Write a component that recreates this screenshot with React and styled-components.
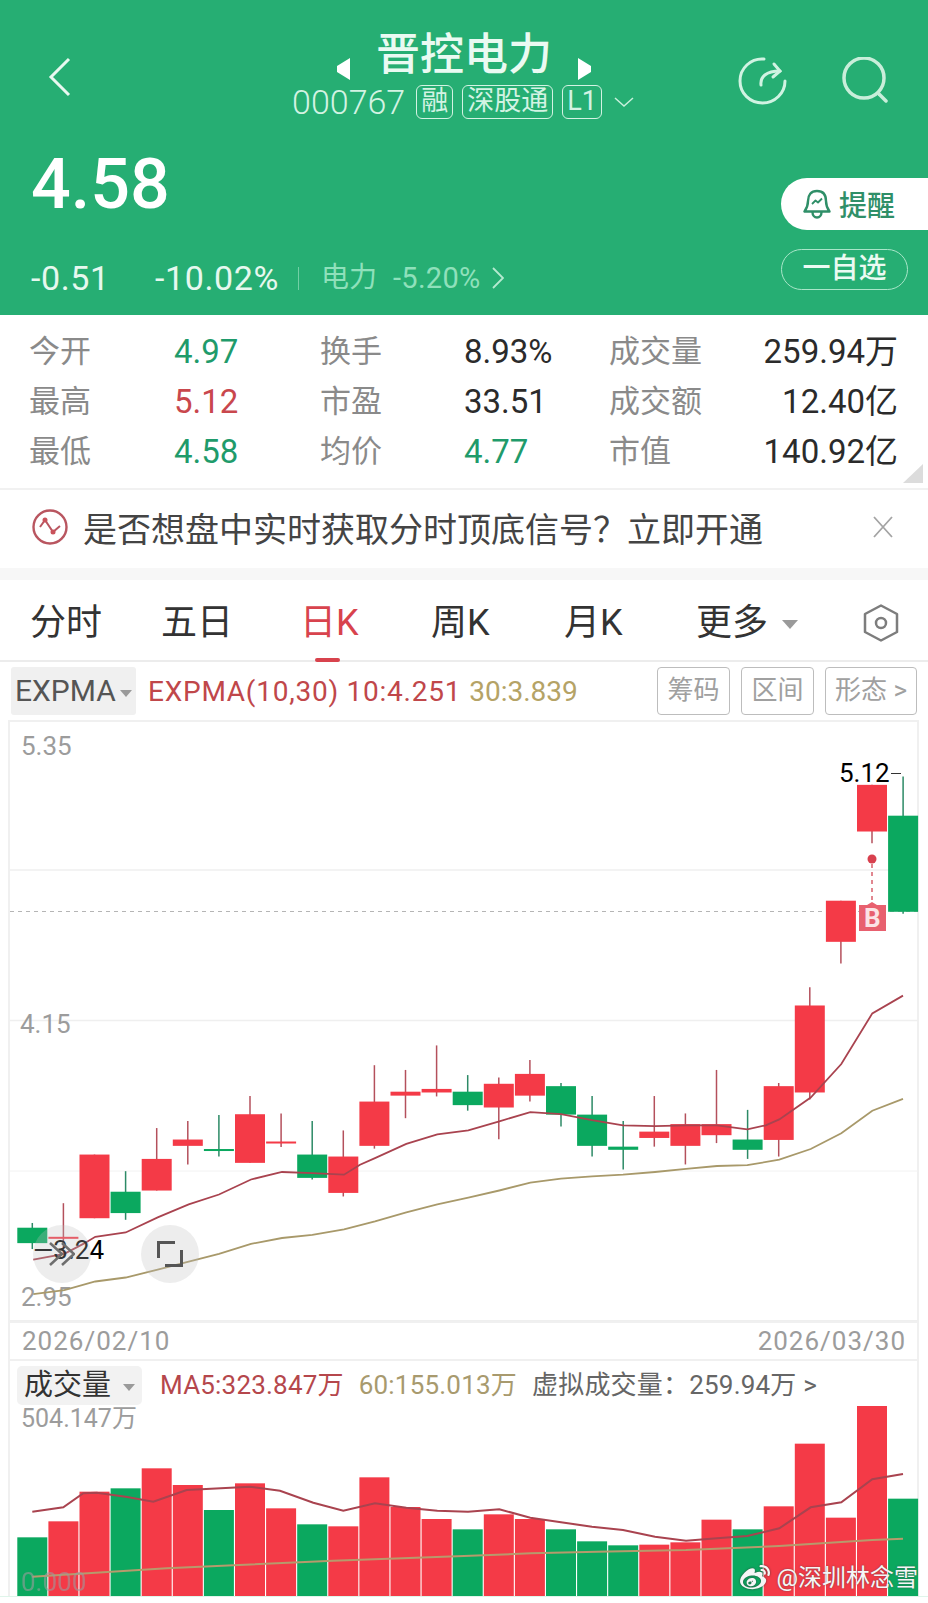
import React from 'react'
import styled, { createGlobalStyle } from 'styled-components'
import { FaWeibo } from 'react-icons/fa'

const GlobalStyle = createGlobalStyle`
  html, body { margin: 0; padding: 0; background: #fff; }
  * { box-sizing: border-box; }
`

const FONT = `Roboto, "Noto Sans CJK SC", sans-serif`
const GREEN = '#26ae73'
const UP = '#f43a47'
const DOWN = '#0ba85f'

// candles: kind, body top, body bottom, wick top, wick bottom (read off the chart zoom)
const candles = [
  ['d', 1284, 1323, 1272, 1338], ['u', 1307, 1311, 1222, 1350], ['u', 1099, 1260, 1099, 1260],
  ['d', 1193, 1247, 1141, 1264], ['u', 1110, 1190, 1032, 1190], ['u', 1061, 1077, 1014, 1124],
  ['d', 1085, 1088, 999, 1104], ['u', 997, 1120, 951, 1120], ['u', 1066, 1069, 995, 1080],
  ['d', 1099, 1158, 1014, 1162], ['u', 1104, 1196, 1038, 1205], ['u', 965, 1077, 873, 1084],
  ['u', 940, 950, 885, 1007], ['u', 933, 942, 823, 952], ['d', 940, 974, 898, 988],
  ['u', 920, 980, 904, 1060], ['u', 895, 950, 860, 965], ['d', 926, 998, 918, 1028],
  ['d', 998, 1077, 951, 1104], ['d', 1079, 1087, 1014, 1137], ['u', 1041, 1057, 951, 1079],
  ['u', 1022, 1077, 995, 1124], ['u', 1022, 1050, 885, 1070], ['d', 1061, 1087, 986, 1110],
  ['u', 926, 1062, 918, 1104], ['u', 722, 942, 676, 960], ['u', 457, 561, 457, 616],
  ['u', 164, 282, 164, 312], ['d', 242, 485, 143, 490],
]

const ma10 = [[100,1365],[193,1350],[250,1325],[286,1307],[377,1296],[473,1258],[566,1225],[657,1200],[753,1162],[846,1143],[937,1146],[1032,1150],[1080,1125],[1125,1108],[1219,1072],[1312,1048],[1405,1038],[1498,1015],[1591,992],[1683,997],[1776,1012],[1869,1025],[1965,1027],[2058,1025],[2151,1025],[2242,1035],[2297,1025],[2338,1010],[2432,955],[2524,870],[2617,742],[2709,697]]
const ma30 = [[100,1452],[193,1442],[286,1420],[377,1410],[473,1390],[566,1370],[657,1350],[753,1325],[846,1310],[937,1302],[1032,1288],[1125,1268],[1219,1245],[1312,1225],[1405,1208],[1498,1190],[1591,1170],[1683,1160],[1776,1154],[1869,1150],[1965,1143],[2058,1135],[2151,1128],[2242,1126],[2338,1112],[2432,1085],[2524,1045],[2617,988],[2709,958]]

const volumes = [
  ['d',652],['u',604],['u',515],['d',505],['u',445],['u',495],['d',570],['u',490],['u',565],['d',613],
  ['u',619],['u',472],['u',561],['u',597],['d',628],['u',583],['u',597],['d',628],['d',664],['d',676],
  ['u',674],['u',667],['u',599],['d',628],['u',559],['u',371],['u',593],['u',258],['d',536],
]
const volMa5 = [[97,575],[190,562],[250,520],[290,518],[377,530],[460,545],[560,510],[750,500],[840,512],[940,548],[1030,572],[1125,550],[1219,563],[1312,572],[1404,575],[1498,568],[1591,593],[1683,607],[1776,620],[1869,630],[1965,650],[2058,662],[2151,655],[2242,648],[2338,625],[2432,562],[2524,547],[2617,478],[2709,462]]
const volMa60 = [[97,770],[500,745],[1000,722],[1392,708],[1592,700],[1792,695],[2058,690],[2338,678],[2617,660],[2709,656]]

const candleX = i => 32.3 + i * 31.1
const priceY = z => 720 + z / 2.529
const toPoints = (list, yFn) => list.map(([x, y]) => `${(x / 3).toFixed(1)},${yFn(y).toFixed(1)}`).join(' ')
const volY = z => 1320 + z / 3 - 1405

const Page = styled.div`
  width: 928px;
  height: 1603px;
  overflow: hidden;
  background: #fff;
  font-family: ${FONT};
`

/* header */
const Header = styled.header`
  height: 315px;
  background: ${GREEN};
  color: #f2fbf6;
  display: flex;
  flex-direction: column;
`
const TopRow = styled.div`
  display: grid;
  grid-template-columns: 1fr auto 1fr;
  padding: 28px 44px 0 44px;
  height: 134px;
`
const BackCell = styled.div`
  padding: 29px 0 0 4px;
`
const TitleBlock = styled.div`
  display: flex;
  flex-direction: column;
  align-items: center;
`
const TitleLine = styled.div`
  display: flex;
  align-items: flex-end;
  gap: 26px;
  height: 52px;
`
const Title = styled.h1`
  margin: 0;
  font-size: 44px;
  line-height: 50px;
  font-weight: 500;
  color: #eafaf2;
`
const Arrow = styled.svg`
  width: 16px;
  height: 22px;
`
const CodeLine = styled.div`
  display: flex;
  align-items: center;
  gap: 9px;
  margin-top: 5px;
  padding-right: 2px;
  color: #d3f3e3;
`
const Code = styled.span`
  font-size: 34px;
  line-height: 34px;
  font-weight: 300;
  margin-right: 2px;
`
const Tag = styled.span`
  height: 34px;
  padding: 0 4px;
  border: 1.5px solid #d3f3e3;
  border-radius: 6px;
  font-size: 27px;
  line-height: 30px;
  white-space: nowrap;
`
const CodeChevron = styled.svg`
  margin-left: 3px;
`
const TopActions = styled.div`
  display: flex;
  justify-content: flex-end;
  align-items: flex-start;
  gap: 54px;
  margin-right: -4px;
  padding-top: 29px;
`
const QuoteRow = styled.div`
  display: flex;
  justify-content: space-between;
  flex: 1;
`
const QuoteLeft = styled.div`
  padding: 17px 0 0 31px;
`
const Price = styled.div`
  font-size: 70px;
  line-height: 66px;
  font-weight: 500;
  color: #fff;
`
const ChangeLine = styled.div`
  display: flex;
  align-items: center;
  margin-top: 45px;
  height: 32px;
`
const Change = styled.span`
  font-size: 34px;
  line-height: 32px;
  letter-spacing: 0.6px;
  width: ${p => p.$w}px;
  color: #e6f8ef;
  white-space: nowrap;
`
const ChangeDivider = styled.span`
  width: 1px;
  height: 23px;
  margin: 0 22px;
  background: #72cfa5;
`
const SectorName = styled.span`
  font-size: 28px;
  line-height: 32px;
  color: #8fe0bb;
  width: 72px;
`
const SectorChange = styled.span`
  font-size: 29px;
  line-height: 32px;
  letter-spacing: 0.3px;
  color: #8fe0bb;
  margin-right: 11px;
`
const QuoteRight = styled.div`
  width: 147px;
  padding-top: 44px;
`
const RemindButton = styled.div`
  height: 52px;
  background: #fff;
  border-radius: 26px 0 0 26px;
  display: flex;
  align-items: center;
  gap: 8px;
  padding-left: 22px;
  font-size: 28px;
  font-weight: 500;
  color: #2f8f68;
`
const WatchButton = styled.div`
  width: 127px;
  height: 41px;
  margin-top: 19px;
  border: 1.5px solid #a9e6c9;
  border-radius: 21px;
  font-size: 28px;
  font-weight: 500;
  line-height: 37px;
  text-align: center;
  color: #eafaf2;
`

/* stats */
const Stats = styled.section`
  position: relative;
  height: 173px;
  padding: 12px 30px 0 29px;
  display: grid;
  grid-template-columns: 145px 146px 144px 145px 110px 1fr;
  grid-auto-rows: 50px;
  align-items: center;
`
const StatLabel = styled.span`
  font-size: 31px;
  line-height: 50px;
  color: #8a8a8a;
  white-space: nowrap;
`
const StatValue = styled.span`
  font-size: 33px;
  line-height: 50px;
  color: ${p => p.$c || '#2b2b2b'};
`
const StatRight = styled(StatValue)`
  justify-self: end;
  white-space: nowrap;
`
const Corner = styled.div`
  position: absolute;
  right: 5px;
  bottom: 5px;
  width: 20px;
  height: 19px;
  background: #dcdcdc;
  clip-path: polygon(100% 0, 100% 100%, 0 100%);
`
const Banner = styled.div`
  height: 80px;
  padding: 0 35px 4px 32px;
  border-top: 2px solid #f1f1f1;
  display: flex;
  align-items: center;
  font-size: 34px;
  color: #444;
`
const BannerText = styled.span`
  margin-left: 15px;
  flex: 1;
  white-space: nowrap;
`
const Gap = styled.div`
  height: 12px;
  background: #f7f7f7;
`

/* tabs */
const Tabs = styled.nav`
  height: 82px;
  border-bottom: 2px solid #ececec;
  padding: 5px 0 0 30px;
  display: grid;
  grid-template-columns: 131px 139px 131px 133px 132px 167px 36px;
  align-items: center;
`
const Tab = styled.span`
  position: relative;
  font-size: 36px;
  line-height: 50px;
  white-space: nowrap;
  color: ${p => (p.$active ? '#d8434d' : '#333')};
  ${p => p.$active && `
    &::after {
      content: '';
      position: absolute;
      left: 15px;
      bottom: -14px;
      width: 25px;
      height: 4px;
      border-radius: 2px;
      background: #d8434d;
    }
  `}
`
const Caret = styled.i`
  display: inline-block;
  width: 0;
  height: 0;
  margin-left: ${p => p.$gap || 4}px;
  vertical-align: middle;
  border-left: ${p => p.$s || 6}px solid transparent;
  border-right: ${p => p.$s || 6}px solid transparent;
  border-top: ${p => (p.$s || 6) + 1}px solid #9a9a9a;
`

/* indicator bar */
const IndicatorBar = styled.div`
  height: 58px;
  padding: 5px 11px 0 11px;
  display: flex;
`
const IndicatorPick = styled.div`
  width: 125px;
  height: 48px;
  padding-left: 4px;
  background: #f0f0f0;
  border-radius: 3px;
  font-size: 30px;
  line-height: 48px;
  color: #555;
  white-space: nowrap;
`
const IndicatorText = styled.div`
  margin-left: 12px;
  flex: 1;
  font-size: 28px;
  line-height: 50px;
  white-space: nowrap;
  color: #c0474a;
  letter-spacing: 0.75px;
`
const Gold = styled.span`
  margin-left: 8px;
  color: #b5a366;
  letter-spacing: 0;
`
const ChipButton = styled.span`
  width: ${p => p.$w}px;
  height: 48px;
  margin-left: 11px;
  border: 1.5px solid #bdbdbd;
  border-radius: 4px;
  font-size: 26px;
  line-height: 44px;
  text-align: center;
  color: #a0a0a0;
  white-space: nowrap;
`

/* charts */
const ChartWrap = styled.div`
  position: relative;
  height: 601px;
  margin: 0 9px 0 8px;
  border-left: 2px solid #f0f0f0;
  border-right: 2px solid #f0f0f0;
  border-top: 2px solid #f0f0f0;
`
const ChartSvg = styled.svg`
  position: absolute;
  left: -10px;
  top: ${p => p.$top}px;
  display: block;
`
const AxisText = styled.text`
  font-family: ${FONT};
  font-size: ${p => p.$size || 26}px;
  fill: #9c9c9c;
`
const MarkText = styled.text`
  font-family: ${FONT};
  font-size: 26px;
  fill: ${p => p.$c || '#000'};
  font-weight: ${p => p.$w || 400};
`
const RoundButton = styled.div`
  position: absolute;
  left: ${p => p.$x}px;
  top: 503px;
  width: 58px;
  height: 58px;
  border-radius: 50%;
  background: rgba(190, 190, 190, 0.28);
  display: flex;
  align-items: center;
  justify-content: center;
`
const DateRow = styled.div`
  height: 40px;
  margin: 0 9px 0 8px;
  padding: 0 11px 0 12px;
  border: 2px solid #f0f0f0;
  display: flex;
  justify-content: space-between;
  font-size: 26px;
  line-height: 36px;
  letter-spacing: 1px;
  color: #9c9c9c;
`
const VolumeHeader = styled.div`
  height: 44px;
  margin: 0 9px 0 8px;
  padding: 5px 0 0 7px;
  border-left: 2px solid #f0f0f0;
  border-right: 2px solid #f0f0f0;
  display: flex;
  align-items: flex-start;
  font-size: 26px;
  line-height: 38px;
  white-space: nowrap;
`
const VolumePick = styled.div`
  width: 125px;
  height: 39px;
  padding-left: 7px;
  margin-right: 18px;
  background: #f2f2f2;
  border-radius: 5px;
  font-size: 29px;
  color: #333;
`
const VolumeValue = styled.span`
  color: ${p => p.$c};
  margin-right: ${p => p.$mr || 0}px;
  letter-spacing: 0.2px;
`
const VolumeChart = styled.div`
  position: relative;
  height: 191px;
  margin: 0 9px 0 8px;
  border-left: 2px solid #f0f0f0;
  border-right: 2px solid #f0f0f0;
`
const Watermark = styled.div`
  position: absolute;
  right: -1px;
  bottom: 3px;
  display: flex;
  align-items: center;
  gap: 6px;
  font-size: 24px;
  line-height: 28px;
  color: #f6f6f6;
  text-shadow: 0 0 2px rgba(70, 70, 70, 0.75);
  white-space: nowrap;
`
const WeiboMark = styled(FaWeibo)`
  color: #f6f6f6;
  filter: drop-shadow(0 0 1px rgba(50, 50, 50, 0.8));
`
const Footer = styled.div`
  height: 7px;
  border-top: 1px solid #dff5ea;
`

const BackIcon = () => (
  <svg width="24" height="40" viewBox="0 0 24 40" fill="none">
    <polyline points="21,2 3,20 21,38" stroke="#e8f8f0" strokeWidth="3" />
  </svg>
)
const ShareIcon = () => (
  <svg width="50" height="48" viewBox="0 0 50 48" fill="none" stroke="#d0f3e2" strokeWidth="3" strokeLinecap="round">
    <path d="M26 2.100C13 1 2 11 2 24c0 12.500 10 22 22.500 22S47 36 47 24" />
    <path d="M23 28c-1-8 5-14 19-14" />
    <path d="M36 7l6 7-7 6" />
  </svg>
)
const SearchIcon = () => (
  <svg width="46" height="46" viewBox="0 0 46 46" fill="none" stroke="#c9eeda" strokeWidth="3.500" strokeLinecap="round">
    <circle cx="22" cy="21" r="20" />
    <path d="M37 37l7 7" />
  </svg>
)
const BellIcon = () => (
  <svg width="28" height="30" viewBox="0 0 28 30" fill="none" stroke="#2f8f68" strokeWidth="2.400" strokeLinejoin="round">
    <path d="M14 2C8 2 5 6 5 12c0 5-1 7-3.500 10.500h25C24 19 23 17 23 12c0-6-3-10-9-10z" />
    <path d="M9.500 23c0 3.500 2 5.500 4.500 5.500s4.500-2 4.500-5.500" />
    <path d="M9 15l3.500-3.500 2.500 2 4-4" strokeWidth="1.800" />
  </svg>
)
const SignalIcon = () => (
  <svg width="36" height="36" viewBox="0 0 36 36" fill="none" stroke="#b95660" strokeWidth="2.400">
    <circle cx="18" cy="18" r="16.500" />
    <path d="M8 18l5-7 8 12 7-6" strokeWidth="2" />
    <circle cx="13" cy="11" r="2.500" fill="#c9525b" stroke="none" />
    <circle cx="21" cy="23" r="2.500" fill="#c9525b" stroke="none" />
  </svg>
)
const CloseIcon = () => (
  <svg width="20" height="22" viewBox="0 0 20 22" fill="none" stroke="#a4a4a4" strokeWidth="1.800">
    <path d="M1 1l18 20M19 1L1 21" />
  </svg>
)
const HexIcon = () => (
  <svg width="36" height="38" viewBox="0 0 36 38" fill="none" stroke="#7d7d7d" strokeWidth="2.500">
    <path d="M18 1.500L34 10v18l-16 8.500L2 28V10z" strokeLinejoin="round" />
    <circle cx="18" cy="19" r="5" />
  </svg>
)

const PriceChart = () => (
  <ChartSvg $top={-2} width="928" height="601" viewBox="0 720 928 601">
    <line x1="10" x2="918" y1="870" y2="870" stroke="#efefef" strokeWidth="1.500" />
    <line x1="10" x2="918" y1="1020.500" y2="1020.500" stroke="#efefef" strokeWidth="1.500" />
    <line x1="10" x2="918" y1="1171" y2="1171" stroke="#f2f2f2" strokeWidth="1" />
    <line x1="10" x2="918" y1="1320.500" y2="1320.500" stroke="#efefef" strokeWidth="1" />
    <line x1="10" x2="918" y1="911.500" y2="911.500" stroke="#b5b5b5" strokeWidth="1" strokeDasharray="4 4" />
    <AxisText x="21" y="755">5.35</AxisText>
    <AxisText x="20" y="1033">4.15</AxisText>
    <AxisText x="21" y="1306">2.95</AxisText>
    {candles.map(([kind, top, bottom, wickTop, wickBottom], i) => {
      const cx = candleX(i)
      const up = kind === 'u'
      return (
        <g key={i}>
          <line x1={cx} x2={cx} y1={priceY(wickTop)} y2={priceY(wickBottom)} stroke={up ? '#b4505c' : '#2c8a66'} strokeWidth="1.500" />
          <rect x={cx - 15} width="30" y={priceY(top)} height={Math.max(priceY(bottom) - priceY(top), 2)} fill={up ? UP : DOWN} />
        </g>
      )
    })}
    <polyline points={toPoints(ma10, priceY)} fill="none" stroke="#a9434f" strokeWidth="1.800" />
    <polyline points={toPoints(ma30, priceY)} fill="none" stroke="#a8996a" strokeWidth="1.800" />
    <circle cx="872" cy="859" r="4.500" fill="#d8404e" />
    <line x1="872" x2="872" y1="864" y2="902" stroke="#d8606c" strokeWidth="1.500" strokeDasharray="4 4" />
    <path d="M859 905h8l5-3 5 3h9v26h-27z" fill="#e8606f" />
    <MarkText x="864" y="927" $w={700} $c="#fbe3e6">B</MarkText>
    <MarkText x="839" y="782">5.12</MarkText>
    <line x1="891" x2="901" y1="773.500" y2="773.500" stroke="#333" strokeWidth="1" />
    <MarkText x="33" y="1259">—3.24</MarkText>
  </ChartSvg>
)

const VolumeSvg = () => (
  <ChartSvg $top={0} width="928" height="191" viewBox="0 0 928 191">
    <AxisText x="21" y="22" $size={25}>504.147万</AxisText>
    {volumes.map(([kind, top], i) => (
      <rect key={i} x={candleX(i) - 15} width="30" y={volY(top)} height={191 - volY(top)} fill={kind === 'u' ? UP : DOWN} />
    ))}
    <polyline points={toPoints(volMa5, volY)} fill="none" stroke="#a9434f" strokeWidth="2" />
    <polyline points={toPoints(volMa60, volY)} fill="none" stroke="#b79a6c" strokeWidth="2" />
    <AxisText x="21" y="186" opacity="0.6">0.000</AxisText>
  </ChartSvg>
)

export default function App() {
  return (
    <Page>
      <GlobalStyle />
      <Header>
        <TopRow>
          <BackCell><BackIcon /></BackCell>
          <TitleBlock>
            <TitleLine>
              <Arrow viewBox="0 0 16 22"><path d="M16 0v22L3 14V8z" fill="#fff" /></Arrow>
              <Title>晋控电力</Title>
              <Arrow viewBox="0 0 16 22"><path d="M0 0v22l13-8V8z" fill="#fff" /></Arrow>
            </TitleLine>
            <CodeLine>
              <Code>000767</Code>
              <Tag>融</Tag>
              <Tag>深股通</Tag>
              <Tag>L1</Tag>
              <CodeChevron width="20" height="10" viewBox="0 0 20 10" fill="none"><polyline points="1,1 10,9 19,1" stroke="#c9f0dc" strokeWidth="1.500" /></CodeChevron>
            </CodeLine>
          </TitleBlock>
          <TopActions>
            <ShareIcon />
            <SearchIcon />
          </TopActions>
        </TopRow>
        <QuoteRow>
          <QuoteLeft>
            <Price>4.58</Price>
            <ChangeLine>
              <Change $w={124}>-0.51</Change>
              <Change $w={121}>-10.02%</Change>
              <ChangeDivider />
              <SectorName>电力</SectorName>
              <SectorChange>-5.20%</SectorChange>
              <svg width="12" height="22" viewBox="0 0 12 22" fill="none"><polyline points="1,1 11,11 1,21" stroke="#b5ead0" strokeWidth="1.800" /></svg>
            </ChangeLine>
          </QuoteLeft>
          <QuoteRight>
            <RemindButton><BellIcon />提醒</RemindButton>
            <WatchButton>一自选</WatchButton>
          </QuoteRight>
        </QuoteRow>
      </Header>

      <Stats>
        <StatLabel>今开</StatLabel>
        <StatValue $c="#1f9b6b">4.97</StatValue>
        <StatLabel>换手</StatLabel>
        <StatValue>8.93%</StatValue>
        <StatLabel>成交量</StatLabel>
        <StatRight>259.94万</StatRight>
        <StatLabel>最高</StatLabel>
        <StatValue $c="#c9474d">5.12</StatValue>
        <StatLabel>市盈</StatLabel>
        <StatValue>33.51</StatValue>
        <StatLabel>成交额</StatLabel>
        <StatRight>12.40亿</StatRight>
        <StatLabel>最低</StatLabel>
        <StatValue $c="#1f9b6b">4.58</StatValue>
        <StatLabel>均价</StatLabel>
        <StatValue $c="#1f9b6b">4.77</StatValue>
        <StatLabel>市值</StatLabel>
        <StatRight>140.92亿</StatRight>
        <Corner />
      </Stats>

      <Banner>
        <SignalIcon />
        <BannerText>{'是否想盘中实时获取分时顶底信号\uFF1F立即开通'}</BannerText>
        <CloseIcon />
      </Banner>
      <Gap />

      <Tabs>
        <Tab>分时</Tab>
        <Tab>五日</Tab>
        <Tab $active>日K</Tab>
        <Tab>周K</Tab>
        <Tab>月K</Tab>
        <Tab>更多<Caret $s={8} $gap={14} /></Tab>
        <HexIcon />
      </Tabs>

      <IndicatorBar>
        <IndicatorPick>EXPMA<Caret /></IndicatorPick>
        <IndicatorText>EXPMA(10,30) 10:4.251<Gold>30:3.839</Gold></IndicatorText>
        <ChipButton $w={73}>筹码</ChipButton>
        <ChipButton $w={73}>区间</ChipButton>
        <ChipButton $w={92}>形态 &gt;</ChipButton>
      </IndicatorBar>

      <ChartWrap>
        <PriceChart />
        <RoundButton $x={23}>
          <svg width="26" height="24" viewBox="0 0 26 24" fill="none" stroke="#6e6e6e" strokeWidth="2.500"><path d="M1 1l12 11L1 23M13 1l12 11-12 11" /></svg>
        </RoundButton>
        <RoundButton $x={131}>
          <svg width="26" height="26" viewBox="0 0 26 26" fill="none" stroke="#555" strokeWidth="3"><path d="M1.500 17V1.500H18M24.500 9v15.500H8" /></svg>
        </RoundButton>
      </ChartWrap>
      <DateRow>
        <span>2026/02/10</span>
        <span>2026/03/30</span>
      </DateRow>
      <VolumeHeader>
        <VolumePick>成交量<Caret $gap={12} /></VolumePick>
        <VolumeValue $c="#b5474c" $mr={15}>MA5:323.847万</VolumeValue>
        <VolumeValue $c="#a89a6e" $mr={15}>60:155.013万</VolumeValue>
        <VolumeValue $c="#666">{'虚拟成交量\uFF1A259.94万 >'}</VolumeValue>
      </VolumeHeader>
      <VolumeChart>
        <VolumeSvg />
        <Watermark><WeiboMark size={30} />@深圳林念雪</Watermark>
      </VolumeChart>
      <Footer />
    </Page>
  )
}
